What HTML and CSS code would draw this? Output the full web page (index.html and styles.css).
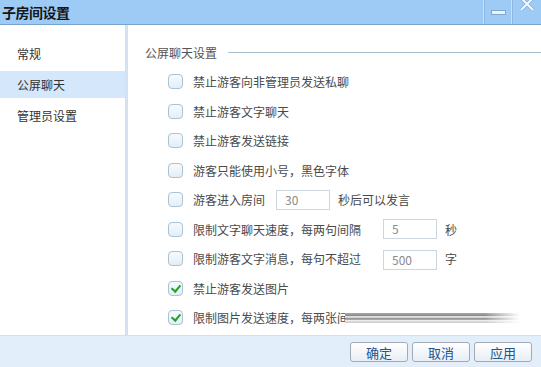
FILE: index.html
```html
<!DOCTYPE html>
<html lang="zh-CN">
<head>
    <meta charset="UTF-8">
    <meta name="viewport" content="width=device-width, initial-scale=1.0">
    <title>子房间设置</title>
    <link rel="stylesheet" href="styles.css">
</head>
<body>

<div class="window">
    <header class="titlebar">
        <h1>子房间设置</h1>
        <div class="controls">
            <span class="sep"></span>
            <span class="ctl min"></span>
            <span class="sep"></span>
            <span class="ctl close">
                <svg width="16" height="12" viewBox="0 0 16 12">
                    <path d="M2 -2 L14 10 M14 -2 L2 10" stroke="#86afd8" stroke-width="3.5" fill="none"/>
                    <path d="M2 -2 L14 10 M14 -2 L2 10" stroke="#f2f8ff" stroke-width="2" fill="none"/>
                </svg>
            </span>
        </div>
    </header>

    <div class="main">
        <!-- 左侧菜单 -->
        <nav class="sidebar">
            <div class="item">常规</div>
            <div class="item active">公屏聊天</div>
            <div class="item">管理员设置</div>
        </nav>

        <section class="content">
            <div class="group-title"><span>公屏聊天设置</span><i></i></div>

            <div class="rows">
                <label class="row"><span class="box"></span>禁止游客向非管理员发送私聊</label>
                <label class="row"><span class="box"></span>禁止游客文字聊天</label>
                <label class="row"><span class="box"></span>禁止游客发送链接</label>
                <label class="row"><span class="box"></span>游客只能使用小号，黑色字体</label>
                <label class="row">
                    <span class="box"></span>游客进入房间
                    <span class="input in-a">30</span>
                    <span class="after">秒后可以发言</span>
                </label>
                <label class="row">
                    <span class="box"></span><span class="fixed">限制文字聊天速度，每两句间隔</span>
                    <span class="input">5</span>
                    <span class="after">秒</span>
                </label>
                <label class="row">
                    <span class="box"></span><span class="fixed">限制游客文字消息，每句不超过</span>
                    <span class="input low">500</span>
                    <span class="after">字</span>
                </label>
                <label class="row"><span class="box checked"></span>禁止游客发送图片</label>
                <label class="row"><span class="box checked"></span>限制图片发送速度，每两张间<span class="smudge"></span></label>
            </div>
        </section>
    </div>

    <footer class="footer">
        <button class="btn">确定</button>
        <button class="btn">取消</button>
        <button class="btn">应用</button>
    </footer>
</div>

</body>
</html>
```

FILE: styles.css
```css
/* Reset */
* {
    margin: 0;
    padding: 0;
    box-sizing: border-box;
}

body {
    font-family: "Noto Sans CJK SC", "Liberation Sans", sans-serif;
    font-size: 12px;
    color: #444;
    background: #fff;
}

.window {
    width: 541px;
    height: 367px;
    display: flex;
    flex-direction: column;
    overflow: hidden;
}

/* 标题栏 */
.titlebar {
    height: 25px;
    background: #9dcbf6;
    border-bottom: 1px solid #78a3cc;
    display: flex;
    justify-content: space-between;
    align-items: flex-start;
}

.titlebar h1 {
    font-size: 14px;
    font-weight: bold;
    color: #151515;
    line-height: 24px;
    padding-left: 2px;
    letter-spacing: -0.5px;
}

.controls {
    display: flex;
    height: 24px;
    flex-shrink: 0;
}

.sep {
    width: 2px;
    height: 24px;
    background: #c4e0fa;
    border-right: 1px solid #8fb8e0;
}

.ctl {
    width: 26px;
    display: flex;
    justify-content: center;
}

.min::before {
    content: "";
    width: 13px;
    height: 3px;
    margin-top: 10px;
    background: #eaf4ff;
    border: 1px solid #7ea8d0;
}

.close {
    width: 28px;
    padding-left: 6px;
    justify-content: flex-start;
}

/* 主体 */
.main {
    flex: 1;
    display: flex;
}

.sidebar {
    width: 128px;
    border-right: 3px solid #d3e2f0;
    padding-top: 15px;
    display: flex;
    flex-direction: column;
    gap: 4px;
}

.item {
    height: 27px;
    line-height: 27px;
    padding-left: 17px;
    color: #333;
}

.item.active {
    background: #d5e8fb;
}

.content {
    flex: 1;
    padding: 17px 0 0 17px;
}

.group-title {
    display: flex;
    align-items: center;
    height: 20px;
    color: #555;
}

.group-title i {
    flex: 1;
    height: 1px;
    margin-left: 11px;
    background: #a9c0cf;
}

.rows {
    padding-top: 5px;
    padding-left: 23px;
}

.row {
    height: 29.5px;
    display: flex;
    align-items: center;
    color: #4a4a4a;
}

.box {
    width: 15px;
    height: 15px;
    margin-right: 10px;
    border: 1px solid #a9c2d4;
    border-radius: 4px;
    background: linear-gradient(#f6fafd, #e3eef8);
    position: relative;
}

.box.checked::after {
    content: "";
    position: absolute;
    left: 4px;
    top: 1px;
    width: 4px;
    height: 7px;
    border: solid #23a125;
    border-width: 0 2px 2px 0;
    transform: rotate(40deg);
}

.fixed {
    width: 180px;
}

.input {
    width: 54px;
    height: 20px;
    line-height: 18px;
    border: 1px solid #ccd6de;
    padding-left: 8px;
    color: #8a8a8a;
    margin-left: 10px;
}

.input.low {
    margin-top: 3px;
}

.in-a {
    margin-left: 11px;
}

.after {
    margin-left: 8px;
}

.smudge {
    width: 175px;
    height: 16px;
    margin-left: -4px;
    background:
        linear-gradient(90deg, rgba(255,255,255,0) 0, rgba(255,255,255,0) 80%, #fff 100%),
        linear-gradient(#fff 0, #fff 20%, #a8a8a8 20%, #8c8c8c 35%, #e8e8e8 35%, #d0d0d0 50%, #8f8f8f 50%, #b5b5b5 65%, #ececec 65%, #c9c9c9 80%, #fff 80%);
}

/* 底部按钮 */
.footer {
    height: 32px;
    background: #e2effb;
    border-top: 1px solid #cfe1f0;
    display: flex;
    justify-content: flex-end;
    align-items: center;
    gap: 4px;
    padding: 1px 9px 0 0;
}

.btn {
    width: 58px;
    height: 20px;
    font-family: inherit;
    font-size: 13px;
    color: #22548e;
    border: 1px solid #a3acb6;
    border-radius: 3px;
    background: linear-gradient(#ffffff, #e7eef5);
}
```
